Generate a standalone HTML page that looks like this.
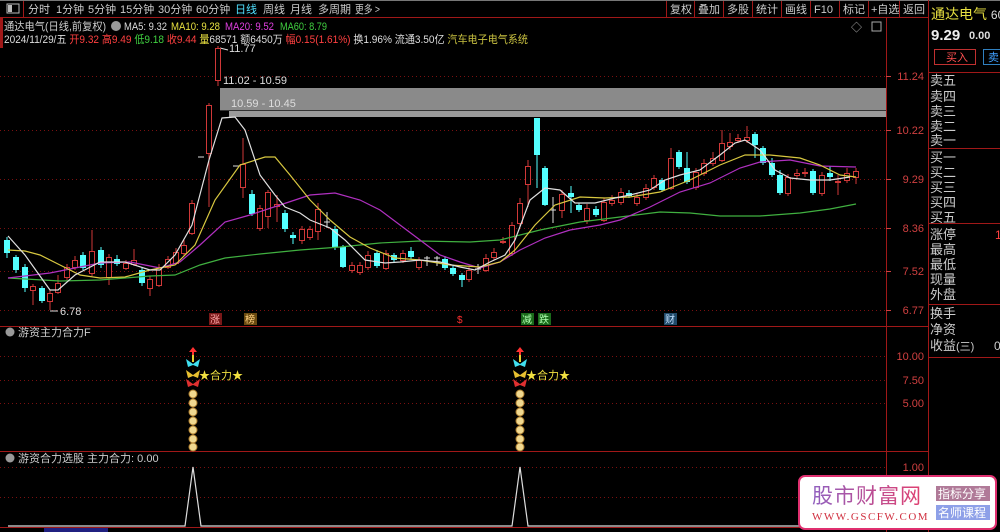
<!DOCTYPE html>
<html><head><meta charset="utf-8"><style>
html,body{margin:0;padding:0;background:#000;width:1000px;height:532px;overflow:hidden}
svg{display:block;font-family:"Liberation Sans","Noto Sans CJK SC",sans-serif}
.r line{stroke:#d03838;stroke-width:1}.r rect{fill:#000;stroke:#d03838;stroke-width:1}
.c line{stroke:#54ffff;stroke-width:1}.c rect{fill:#54ffff}
.g{stroke:#7a1010;stroke-dasharray:1 3;stroke-width:1}
</style></head><body>
<svg width="1000" height="532" viewBox="0 0 1000 532" xmlns="http://www.w3.org/2000/svg">
<rect width="1000" height="532" fill="#000"/>
<line x1="0" y1="0.5" x2="1000" y2="0.5" stroke="#777"/>
<line x1="0" y1="17.5" x2="928" y2="17.5" stroke="#a01818"/>
<rect x="7" y="4" width="12" height="9" fill="none" stroke="#bbb"/><rect x="8" y="5" width="4" height="7" fill="#bbb"/>
<line x1="23.5" y1="1" x2="23.5" y2="17" stroke="#a01818"/>
<g font-size="11" fill="#ccc">
<text x="28" y="13">分时</text><text x="56" y="13">1分钟</text><text x="88" y="13">5分钟</text><text x="120" y="13">15分钟</text><text x="158" y="13">30分钟</text><text x="196" y="13">60分钟</text><text x="235" y="13" fill="#4fe0ff">日线</text><text x="263" y="13">周线</text><text x="290" y="13">月线</text><text x="318" y="13">多周期</text><text x="355" y="13" textLength="25" lengthAdjust="spacingAndGlyphs">更多 &gt;</text>
<text x="670" y="13">复权</text><text x="698" y="13">叠加</text><text x="727" y="13">多股</text><text x="756" y="13">统计</text><text x="785" y="13">画线</text><text x="814" y="13">F10</text><text x="843" y="13">标记</text><text x="871" y="13">+自选</text><text x="903" y="13">返回</text>
</g>
<g stroke="#a01818"><line x1="666.5" y1="1" x2="666.5" y2="17"/><line x1="694.5" y1="1" x2="694.5" y2="17"/><line x1="723.5" y1="1" x2="723.5" y2="17"/><line x1="752.5" y1="1" x2="752.5" y2="17"/><line x1="781.5" y1="1" x2="781.5" y2="17"/><line x1="810.5" y1="1" x2="810.5" y2="17"/><line x1="839.5" y1="1" x2="839.5" y2="17"/><line x1="868.5" y1="1" x2="868.5" y2="17"/><line x1="899.5" y1="1" x2="899.5" y2="17"/></g>
<g stroke="#a01818"><line x1="886.5" y1="17" x2="886.5" y2="532"/><line x1="928.5" y1="0" x2="928.5" y2="532"/><line x1="0" y1="326.5" x2="928" y2="326.5"/><line x1="0" y1="451.5" x2="928" y2="451.5"/><line x1="0" y1="527.5" x2="928" y2="527.5"/>
<line x1="928" y1="72.5" x2="1000" y2="72.5"/><line x1="928" y1="148.5" x2="1000" y2="148.5"/><line x1="928" y1="223.5" x2="1000" y2="223.5"/><line x1="928" y1="304.5" x2="1000" y2="304.5"/><line x1="928" y1="357.5" x2="1000" y2="357.5"/></g>
<rect x="0" y="18" width="3" height="30" fill="#a01818"/>
<g class="g"><line x1="0" y1="76.5" x2="886" y2="76.5"/><line x1="0" y1="130.5" x2="886" y2="130.5"/><line x1="0" y1="179.5" x2="886" y2="179.5"/><line x1="0" y1="228.5" x2="886" y2="228.5"/><line x1="0" y1="271.5" x2="886" y2="271.5"/><line x1="0" y1="310.5" x2="886" y2="310.5"/>
<line x1="0" y1="356.5" x2="886" y2="356.5"/><line x1="0" y1="380.5" x2="886" y2="380.5"/><line x1="0" y1="403.5" x2="886" y2="403.5"/><line x1="0" y1="467.5" x2="886" y2="467.5"/><line x1="0" y1="497.5" x2="886" y2="497.5"/></g>
<g font-size="11" fill="#d04040" text-anchor="end">
<text x="924" y="80">11.24</text><text x="924" y="134">10.22</text><text x="924" y="183">9.29</text><text x="924" y="232">8.36</text><text x="924" y="275">7.52</text><text x="924" y="314">6.77</text>
<text x="924" y="360">10.00</text><text x="924" y="384">7.50</text><text x="924" y="407">5.00</text><text x="924" y="471">1.00</text></g>
<g stroke="#d04040"><line x1="886" y1="76.5" x2="891" y2="76.5"/><line x1="886" y1="130.5" x2="891" y2="130.5"/><line x1="886" y1="179.5" x2="891" y2="179.5"/><line x1="886" y1="228.5" x2="891" y2="228.5"/><line x1="886" y1="271.5" x2="891" y2="271.5"/><line x1="886" y1="310.5" x2="891" y2="310.5"/></g>
<g font-size="11">
<text x="4" y="30" fill="#ccc" textLength="102" lengthAdjust="spacingAndGlyphs">通达电气(日线,前复权)</text><circle cx="116" cy="26" r="5" fill="#999"/>
<text x="124" y="30" fill="#ddd" textLength="43" lengthAdjust="spacingAndGlyphs">MA5: 9.32</text><text x="171" y="30" fill="#e8e040" textLength="49" lengthAdjust="spacingAndGlyphs">MA10: 9.28</text><text x="225" y="30" fill="#e040e0" textLength="49" lengthAdjust="spacingAndGlyphs">MA20: 9.52</text><text x="280" y="30" fill="#40d040" textLength="47" lengthAdjust="spacingAndGlyphs">MA60: 8.79</text>
<text x="4" y="43" fill="#ddd" textLength="524" lengthAdjust="spacingAndGlyphs">2024/11/29/五 <tspan fill="#ff4040">开9.32 高9.49</tspan> <tspan fill="#40d040">低9.18</tspan> <tspan fill="#ff4040">收9.44</tspan> <tspan fill="#e8e040">量</tspan>68571 额6450万 <tspan fill="#ff4040">幅0.15(1.61%)</tspan> 换1.96% 流通3.50亿 <tspan fill="#c8c040">汽车电子电气系统</tspan></text>
</g>
<text x="851" y="31" font-size="11" fill="#aaa">◇</text><rect x="872" y="22" width="9" height="9" fill="none" stroke="#aaa"/>
<rect x="220" y="88" width="666" height="22" fill="#8a8a8a"/>
<rect x="229" y="111" width="657" height="6" fill="#9a9a9a"/>
<line x1="220" y1="110.5" x2="886" y2="110.5" stroke="#333"/>
<g font-size="11" fill="#ddd"><text x="229" y="52">11.77</text><text x="223" y="84">11.02 - 10.59</text><text x="231" y="107">10.59 - 10.45</text><text x="60" y="315">6.78</text></g>
<line x1="220" y1="48" x2="228" y2="50" stroke="#ddd"/><line x1="50" y1="311" x2="58" y2="311" stroke="#ddd"/>
<line x1="198" y1="157" x2="204" y2="157" stroke="#ddd"/><line x1="233" y1="166" x2="239" y2="166" stroke="#ddd"/>
<g class="c">
<line x1="7" y1="237" x2="7" y2="258"/><rect x="4" y="240" width="6" height="13"/>
<line x1="16" y1="255" x2="16" y2="273"/><rect x="13" y="257" width="6" height="13"/>
<line x1="25" y1="264" x2="25" y2="292"/><rect x="22" y="267" width="6" height="21"/>
<line x1="42" y1="286" x2="42" y2="303"/><rect x="39" y="288" width="6" height="13"/>
<line x1="83" y1="252" x2="83" y2="270"/><rect x="80" y="255" width="6" height="13"/>
<line x1="101" y1="247" x2="101" y2="268"/><rect x="98" y="250" width="6" height="15"/>
<line x1="117" y1="255" x2="117" y2="266"/><rect x="114" y="259" width="6" height="5"/>
<line x1="142" y1="267" x2="142" y2="286"/><rect x="139" y="270" width="6" height="13"/>
<line x1="252" y1="190" x2="252" y2="216"/><rect x="249" y="194" width="6" height="20"/>
<line x1="285" y1="210" x2="285" y2="232"/><rect x="282" y="213" width="6" height="16"/>
<line x1="293" y1="232" x2="293" y2="244"/><rect x="290" y="235" width="6" height="3"/>
<line x1="335" y1="226" x2="335" y2="250"/><rect x="332" y="229" width="6" height="18"/>
<line x1="343" y1="245" x2="343" y2="268"/><rect x="340" y="247" width="6" height="20"/>
<line x1="377" y1="250" x2="377" y2="268"/><rect x="374" y="253" width="6" height="13"/>
<line x1="394" y1="253" x2="394" y2="262"/><rect x="391" y="255" width="6" height="5"/>
<line x1="411" y1="247" x2="411" y2="259"/><rect x="408" y="251" width="6" height="6"/>
<line x1="445" y1="256" x2="445" y2="270"/><rect x="442" y="259" width="6" height="9"/>
<line x1="453" y1="266" x2="453" y2="276"/><rect x="450" y="268" width="6" height="6"/>
<line x1="462" y1="273" x2="462" y2="287"/><rect x="459" y="275" width="6" height="5"/>
<line x1="537" y1="118" x2="537" y2="188"/><rect x="534" y="118" width="6" height="37"/>
<line x1="545" y1="166" x2="545" y2="206"/><rect x="542" y="168" width="6" height="37"/>
<line x1="571" y1="186" x2="571" y2="213"/><rect x="568" y="193" width="6" height="4"/>
<line x1="579" y1="203" x2="579" y2="212"/><rect x="576" y="205" width="6" height="5"/>
<line x1="596" y1="206" x2="596" y2="217"/><rect x="593" y="209" width="6" height="6"/>
<line x1="629" y1="190" x2="629" y2="198"/><rect x="626" y="193" width="6" height="3"/>
<line x1="662" y1="178" x2="662" y2="192"/><rect x="659" y="180" width="6" height="10"/>
<line x1="679" y1="150" x2="679" y2="169"/><rect x="676" y="152" width="6" height="15"/>
<line x1="687" y1="152" x2="687" y2="184"/><rect x="684" y="168" width="6" height="14"/>
<line x1="755" y1="132" x2="755" y2="158"/><rect x="752" y="134" width="6" height="11"/>
<line x1="763" y1="146" x2="763" y2="165"/><rect x="760" y="148" width="6" height="15"/>
<line x1="772" y1="158" x2="772" y2="177"/><rect x="769" y="163" width="6" height="12"/>
<line x1="780" y1="170" x2="780" y2="195"/><rect x="777" y="175" width="6" height="18"/>
<line x1="813" y1="169" x2="813" y2="195"/><rect x="810" y="171" width="6" height="22"/>
<line x1="830" y1="166" x2="830" y2="181"/><rect x="827" y="173" width="6" height="4"/>
</g>
<g class="r">
<line x1="33" y1="284" x2="33" y2="305"/><rect x="30.5" y="286.5" width="5" height="4"/>
<line x1="50" y1="290" x2="50" y2="310"/><rect x="47.5" y="293.5" width="5" height="8"/>
<line x1="58" y1="275" x2="58" y2="294"/><rect x="55.5" y="283.5" width="5" height="9"/>
<line x1="67" y1="264" x2="67" y2="280"/><rect x="64.5" y="267.5" width="5" height="10"/>
<line x1="75" y1="256" x2="75" y2="270"/><rect x="72.5" y="260.5" width="5" height="7"/>
<line x1="92" y1="230" x2="92" y2="276"/><rect x="89.5" y="251.5" width="5" height="22"/>
<line x1="109" y1="254" x2="109" y2="285"/><rect x="106.5" y="257.5" width="5" height="20"/>
<line x1="126" y1="260" x2="126" y2="270"/><rect x="123.5" y="263.5" width="5" height="5"/>
<line x1="134" y1="249" x2="134" y2="266"/><rect x="131.5" y="260.5" width="5" height="4"/>
<line x1="150" y1="276" x2="150" y2="296"/><rect x="147.5" y="279.5" width="5" height="9"/>
<line x1="159" y1="264" x2="159" y2="287"/><rect x="156.5" y="267.5" width="5" height="18"/>
<line x1="168" y1="256" x2="168" y2="269"/><rect x="165.5" y="259.5" width="5" height="8"/>
<line x1="176" y1="248" x2="176" y2="265"/><rect x="173.5" y="252.5" width="5" height="11"/>
<line x1="184" y1="240" x2="184" y2="256"/><rect x="181.5" y="245.5" width="5" height="8"/>
<line x1="192" y1="200" x2="192" y2="235"/><rect x="189.5" y="203.5" width="5" height="30"/>
<line x1="209" y1="103" x2="209" y2="207"/><rect x="206.5" y="105.5" width="5" height="48"/>
<line x1="218" y1="46" x2="218" y2="86"/><rect x="215.5" y="48.5" width="5" height="32"/>
<line x1="243" y1="138" x2="243" y2="198"/><rect x="240.5" y="164.5" width="5" height="23"/>
<line x1="260" y1="205" x2="260" y2="231"/><rect x="257.5" y="208.5" width="5" height="20"/>
<line x1="268" y1="190" x2="268" y2="228"/><rect x="265.5" y="192.5" width="5" height="24"/>
<line x1="277" y1="195" x2="277" y2="222"/><rect x="274.5" y="204.5" width="5" height="2"/>
<line x1="302" y1="226" x2="302" y2="244"/><rect x="299.5" y="229.5" width="5" height="11"/>
<line x1="310" y1="226" x2="310" y2="240"/><rect x="307.5" y="229.5" width="5" height="8"/>
<line x1="318" y1="203" x2="318" y2="240"/><rect x="315.5" y="209.5" width="5" height="22"/>
<line x1="352" y1="262" x2="352" y2="273"/><rect x="349.5" y="265.5" width="5" height="5"/>
<line x1="360" y1="262" x2="360" y2="275"/><rect x="357.5" y="265.5" width="5" height="7"/>
<line x1="368" y1="251" x2="368" y2="270"/><rect x="365.5" y="255.5" width="5" height="12"/>
<line x1="386" y1="250" x2="386" y2="270"/><rect x="383.5" y="253.5" width="5" height="15"/>
<line x1="403" y1="250" x2="403" y2="263"/><rect x="400.5" y="253.5" width="5" height="7"/>
<line x1="419" y1="257" x2="419" y2="270"/><rect x="416.5" y="260.5" width="5" height="7"/>
<line x1="469" y1="267" x2="469" y2="282"/><rect x="466.5" y="270.5" width="5" height="9"/>
<line x1="486" y1="254" x2="486" y2="272"/><rect x="483.5" y="258.5" width="5" height="12"/>
<line x1="494" y1="248" x2="494" y2="260"/><rect x="491.5" y="252.5" width="5" height="5"/>
<line x1="503" y1="237" x2="503" y2="244"/><rect x="500.5" y="241.5" width="5" height="1"/>
<line x1="512" y1="222" x2="512" y2="256"/><rect x="509.5" y="225.5" width="5" height="28"/>
<line x1="520" y1="198" x2="520" y2="226"/><rect x="517.5" y="203.5" width="5" height="20"/>
<line x1="528" y1="160" x2="528" y2="207"/><rect x="525.5" y="166.5" width="5" height="18"/>
<line x1="562" y1="190" x2="562" y2="218"/><rect x="559.5" y="194.5" width="5" height="16"/>
<line x1="587" y1="204" x2="587" y2="224"/><rect x="584.5" y="208.5" width="5" height="12"/>
<line x1="604" y1="198" x2="604" y2="222"/><rect x="601.5" y="202.5" width="5" height="18"/>
<line x1="612" y1="195" x2="612" y2="206"/><rect x="609.5" y="200.5" width="5" height="3"/>
<line x1="621" y1="188" x2="621" y2="205"/><rect x="618.5" y="192.5" width="5" height="10"/>
<line x1="637" y1="193" x2="637" y2="206"/><rect x="634.5" y="197.5" width="5" height="6"/>
<line x1="646" y1="184" x2="646" y2="200"/><rect x="643.5" y="188.5" width="5" height="9"/>
<line x1="654" y1="175" x2="654" y2="190"/><rect x="651.5" y="178.5" width="5" height="9"/>
<line x1="671" y1="148" x2="671" y2="190"/><rect x="668.5" y="158.5" width="5" height="30"/>
<line x1="696" y1="168" x2="696" y2="190"/><rect x="693.5" y="172.5" width="5" height="15"/>
<line x1="704" y1="159" x2="704" y2="176"/><rect x="701.5" y="163.5" width="5" height="10"/>
<line x1="713" y1="152" x2="713" y2="166"/><rect x="710.5" y="158.5" width="5" height="5"/>
<line x1="722" y1="130" x2="722" y2="162"/><rect x="719.5" y="143.5" width="5" height="17"/>
<line x1="730" y1="133" x2="730" y2="150"/><rect x="727.5" y="142.5" width="5" height="4"/>
<line x1="738" y1="134" x2="738" y2="143"/><rect x="735.5" y="138.5" width="5" height="2"/>
<line x1="747" y1="126" x2="747" y2="143"/><rect x="744.5" y="137.5" width="5" height="3"/>
<line x1="788" y1="174" x2="788" y2="196"/><rect x="785.5" y="177.5" width="5" height="16"/>
<line x1="797" y1="169" x2="797" y2="178"/><rect x="794.5" y="173.5" width="5" height="2"/>
<line x1="805" y1="168" x2="805" y2="177"/><rect x="802.5" y="172.5" width="5" height="1"/>
<line x1="822" y1="172" x2="822" y2="196"/><rect x="819.5" y="175.5" width="5" height="18"/>
<line x1="838" y1="175" x2="838" y2="195"/><rect x="835.5" y="181.5" width="5" height="1"/>
<line x1="847" y1="168" x2="847" y2="183"/><rect x="844.5" y="173.5" width="5" height="7"/>
<line x1="856" y1="168" x2="856" y2="184"/><rect x="853.5" y="171.5" width="5" height="6"/>
</g>
<g stroke="#ddd"><line x1="327" y1="212" x2="327" y2="228"/><line x1="324" y1="222" x2="330" y2="222"/><line x1="553" y1="197" x2="553" y2="223"/><line x1="550" y1="210" x2="556" y2="210"/><line x1="478" y1="264" x2="478" y2="274"/><line x1="475" y1="269" x2="481" y2="269"/><line x1="427" y1="256" x2="427" y2="266"/><line x1="424" y1="258" x2="430" y2="258"/><line x1="437" y1="256" x2="437" y2="266"/><line x1="434" y1="258" x2="440" y2="258"/></g>
<g fill="none" stroke-width="1.2">
<polyline stroke="#40b040" points="8,278 60,281 100,280 150,276 175,275 200,265 225,258 260,254 300,250 340,247 380,243 420,241 470,242 500,240 540,230 580,222 620,217 660,212 690,213 720,216 760,216 800,213 830,209 856,204"/>
<polyline stroke="#b030c0" points="8,278 50,273 100,263 130,262 160,268 180,262 200,245 225,222 250,215 280,205 310,195 335,193 360,200 380,210 400,225 420,240 440,255 460,262 480,268 500,262 520,250 545,238 570,230 600,225 620,220 650,207 680,192 710,183 740,168 760,162 790,160 820,166 856,167"/>
<polyline stroke="#d8c840" points="8,250 25,251 40,255 60,265 80,275 100,278 125,277 150,270 175,265 195,245 215,200 240,165 265,157 275,157 290,175 310,200 330,220 350,237 370,248 395,258 420,260 450,265 480,267 500,262 515,250 535,225 555,205 580,197 605,198 630,197 660,192 690,180 720,165 745,155 770,155 800,158 820,165 840,175 856,177"/>
<polyline stroke="#e0e0e0" points="8,236 25,255 50,290 58,290 75,275 100,262 125,262 150,270 160,270 175,255 192,225 209,160 222,118 235,117 245,130 260,175 275,195 285,207 300,213 310,220 330,228 345,240 365,260 385,263 400,262 420,260 440,262 460,267 475,270 490,262 505,255 515,240 530,200 545,188 560,190 575,203 595,203 615,198 630,195 650,190 665,180 680,175 700,170 720,155 735,143 745,140 760,150 775,170 790,178 810,180 830,180 850,177"/>
</g>
<g font-size="10"><rect x="209" y="313" width="13" height="12" fill="#7a1818"/><text x="210" y="323" fill="#ffaaaa">涨</text>
<rect x="244" y="313" width="13" height="12" fill="#6a4a10"/><text x="245" y="323" fill="#ffd080">榜</text>
<text x="457" y="323" fill="#ff3030">$</text>
<rect x="521" y="313" width="13" height="12" fill="#1a6a1a"/><text x="522" y="323" fill="#b0ffb0">减</text>
<rect x="538" y="313" width="13" height="12" fill="#1a6a1a"/><text x="539" y="323" fill="#b0ffb0">跌</text>
<rect x="664" y="313" width="13" height="12" fill="#204a6a"/><text x="665" y="323" fill="#c0e0ff">财</text></g>
<circle cx="10" cy="332" r="4.5" fill="#999"/><text x="18" y="336" font-size="11" fill="#ccc">游资主力合力F</text>
<g id="sig">
<path d="M193 347 l-4 5 h3 v5 h2 v-5 h3 z" fill="#ff3030"/><line x1="193" y1="355" x2="193" y2="362" stroke="#e8d030" stroke-width="2"/>
<path d="M186 359 l7 5 l7 -5 l-2 8 l-5 -2 l-5 2 z" fill="#40e0f0"/>
<path d="M186 370 l7 5 l7 -5 l-2 8 l-5 -2 l-5 2 z" fill="#e8c030"/>
<path d="M186 379 l7 5 l7 -5 l-2 8 l-5 -2 l-5 2 z" fill="#e03030"/>
<g fill="#f0d890" stroke="#b08030"><circle cx="193" cy="394" r="4"/><circle cx="193" cy="403" r="4"/><circle cx="193" cy="412" r="4"/><circle cx="193" cy="421" r="4"/><circle cx="193" cy="430" r="4"/><circle cx="193" cy="439" r="4"/><circle cx="193" cy="447" r="4"/></g>
<text x="199" y="379" font-size="11" fill="#f0e040">★合力★</text>
</g>
<use href="#sig" x="327"/>
<circle cx="10" cy="458" r="4.5" fill="#999"/><text x="18" y="462" font-size="11" fill="#ccc">游资合力选股  主力合力: 0.00</text>
<polyline fill="none" stroke="#ddd" stroke-width="1.2" points="8,526 185,526 193,467 201,526 512,526 520,467 528,526 880,526"/>
<rect x="44" y="528" width="64" height="4" fill="#202080"/>
<text x="931" y="19" font-size="14" fill="#e8e040">通达电气 <tspan font-size="12" fill="#ddd">60</tspan></text>
<text x="931" y="40" font-size="15" font-weight="bold" fill="#eee">9.29</text><text x="969" y="39" font-size="11" font-weight="bold" fill="#ddd">0.00</text>
<rect x="934.5" y="49.5" width="41" height="15" fill="none" stroke="#c03030"/><text x="946" y="61" font-size="11" fill="#ff5050">买入</text>
<rect x="983.5" y="49.5" width="20" height="15" fill="none" stroke="#3080c0"/><text x="988" y="61" font-size="11" fill="#40a0ff">卖出</text>
<g font-size="13" fill="#ccc">
<text x="930" y="85">卖五</text><text x="930" y="101">卖四</text><text x="930" y="116">卖三</text><text x="930" y="131">卖二</text><text x="930" y="145">卖一</text>
<text x="930" y="162">买一</text><text x="930" y="177">买二</text><text x="930" y="192">买三</text><text x="930" y="207">买四</text><text x="930" y="222">买五</text>
<text x="930" y="239">涨停</text><text x="930" y="254">最高</text><text x="930" y="269">最低</text><text x="930" y="284">现量</text><text x="930" y="299">外盘</text>
<text x="930" y="318">换手</text><text x="930" y="334">净资</text><text x="930" y="350">收益<tspan font-size="11">(三)</tspan></text></g>
<text x="995" y="239" font-size="12" fill="#ff4040">1</text><text x="994" y="350" font-size="12" fill="#ccc">0</text>
<rect x="799" y="476" width="197" height="53" rx="6" fill="#fff" stroke="#e03070" stroke-width="2"/>
<defs><linearGradient id="wg" x1="0" x2="1"><stop offset="0" stop-color="#9060c0"/><stop offset="1" stop-color="#e04070"/></linearGradient></defs>
<text x="812" y="503" font-size="21" fill="url(#wg)" letter-spacing="1">股市财富网</text>
<text x="812" y="520" font-size="11" fill="#d03040" font-family="Liberation Serif,serif" letter-spacing="1.5">WWW.GSCFW.COM</text>
<rect x="936" y="486" width="54" height="15" fill="#b07a98"/><text x="938" y="498" font-size="12" fill="#fff">指标分享</text>
<rect x="936" y="505" width="54" height="15" fill="#8ea0e8"/><text x="938" y="517" font-size="12" fill="#fff">名师课程</text>
</svg>
</body></html>
